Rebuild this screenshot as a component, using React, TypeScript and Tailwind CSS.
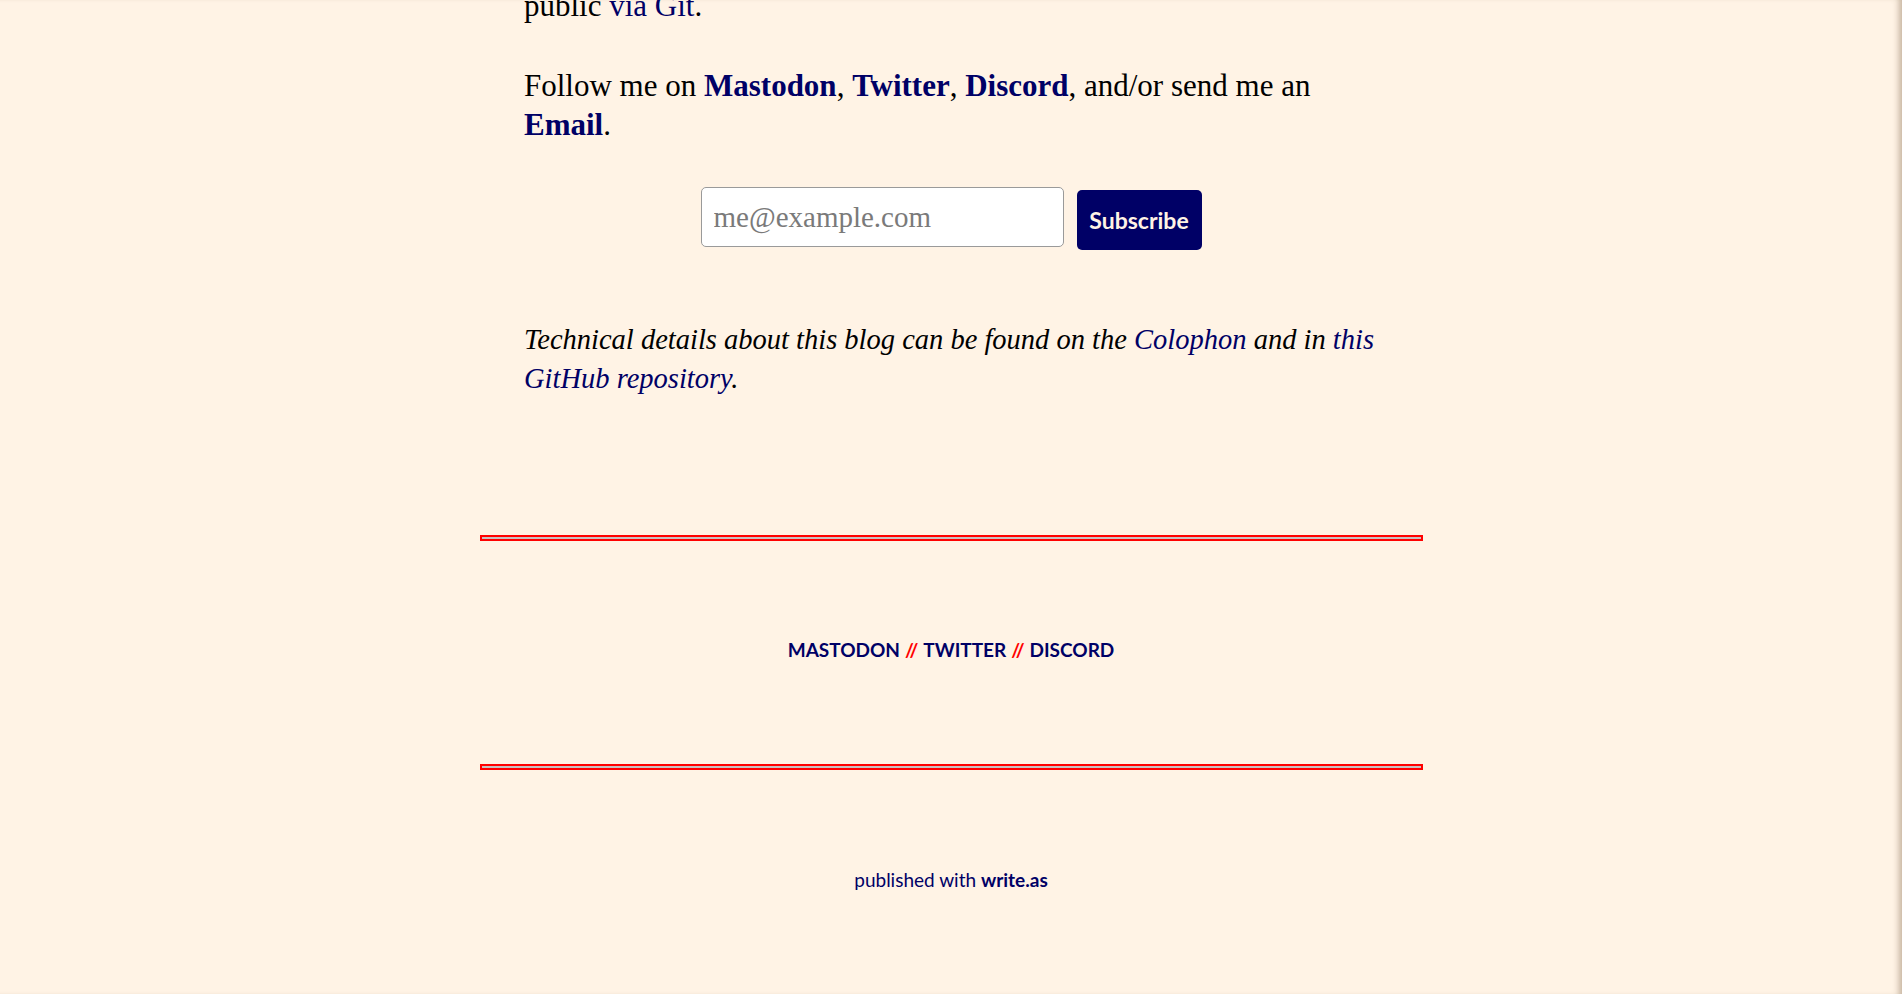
const serif = { fontFamily: '"Liberation Serif", "DejaVu Serif", serif' };
const sans = { fontFamily: 'Lato, "Open Sans", sans-serif' };

const FooterLinks = () => (
  <div className="flex justify-center text-[19px] font-bold text-[#000066]" style={sans}>
    <a href="#">MASTODON</a>
    <span className="mx-[5px] text-[#ff0000]">//</span>
    <a href="#">TWITTER</a>
    <span className="mx-[5px] text-[#ff0000]">//</span>
    <a href="#">DISCORD</a>
  </div>
);

const Rule = () => (
  <div className="mx-auto h-[6px] w-[943px] border-2 border-[#ff0000] bg-[#c9c0c0]" />
);

export default function App() {
  return (
    <div className="h-[994px] overflow-hidden bg-[#fff3e5] shadow-[inset_-7px_0_6px_-4px_rgba(90,60,30,0.35)]">
      {/* post body */}
      <article className="mx-auto w-[862px] pl-[4px] text-[31px] leading-[39px] text-black" style={serif}>
        <p className="-mt-[14px]">
          public <a href="#" className="text-[#000066]">via Git</a>.
        </p>
        <p className="mt-[41px]">
          Follow me on <a href="#" className="font-bold text-[#000066]">Mastodon</a>,{" "}
          <a href="#" className="font-bold text-[#000066]">Twitter</a>,{" "}
          <a href="#" className="font-bold text-[#000066]">Discord</a>, and/or send me an{" "}
          <a href="#" className="font-bold text-[#000066]">Email</a>.
        </p>

        <form className="mt-[43px] -ml-[4px] flex justify-center gap-[13px]" onSubmit={(e) => e.preventDefault()}>
          <input
            type="email"
            placeholder="me@example.com"
            className="h-[60px] w-[363px] rounded-[5px] border border-[#9a9a9a] bg-white px-[12px] text-[29px] text-black placeholder:text-[#7a7a7a] outline-none"
            style={serif}
          />
          <button
            type="submit"
            className="mt-[3px] h-[60px] w-[125px] rounded-[5px] bg-[#000066] text-[23px] font-bold text-[#fff3e5]"
            style={sans}
          >
            Subscribe
          </button>
        </form>

        <p className="mt-[70px] text-[28.5px] italic">
          Technical details about this blog can be found on the <a href="#" className="text-[#000066]">Colophon</a> and in{" "}
          <a href="#" className="text-[#000066]">this GitHub repository</a>.
        </p>
      </article>

      <div className="mt-[137px]">
        <Rule />
      </div>
      <div className="pt-[95px] pb-[99px]">
        <FooterLinks />
      </div>
      <Rule />

      <footer className="mt-[96px] text-center text-[19px] text-[#000066]" style={sans}>
        published with <a href="#" className="font-bold">write.as</a>
      </footer>
    </div>
  );
}
